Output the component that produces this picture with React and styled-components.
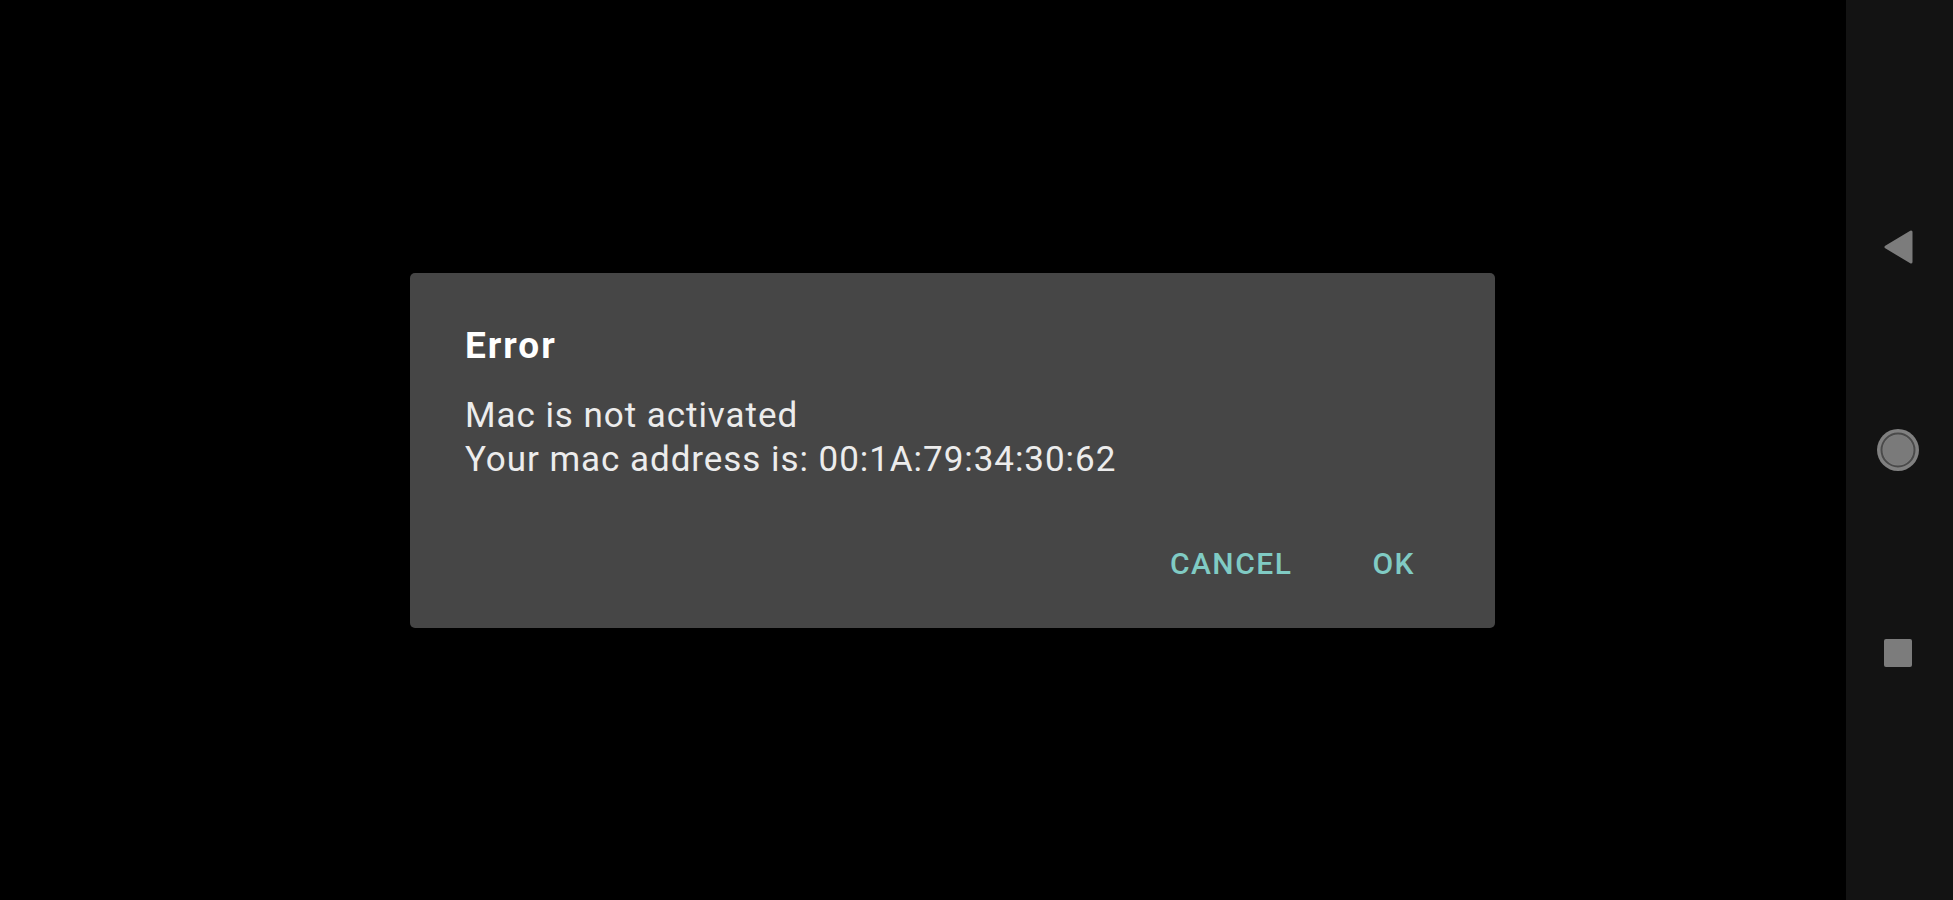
import React from "react";
import styled, { createGlobalStyle } from "styled-components";

const Global = createGlobalStyle`
  html, body { margin: 0; padding: 0; background: #000; }
  body { font-family: Roboto, "Noto Sans", "Liberation Sans", sans-serif; }
  * { box-sizing: border-box; }
`;

const Screen = styled.div`
  display: flex;
  width: 1953px;
  height: 900px;
  background: #000;
  overflow: hidden;
`;

const Stage = styled.main`
  flex: 1;
  display: flex;
  align-items: center;
  padding-left: 410px;
`;

const Dialog = styled.section`
  width: 1085px;
  height: 355px;
  background: #464646;
  border-radius: 5px;
  box-shadow: 0 2px 6px rgba(0, 0, 0, 0.6);
  padding: 51px 62px 46px 55px;
  display: flex;
  flex-direction: column;
`;

const Title = styled.h2`
  margin: 0;
  font-size: 37px;
  line-height: 43px;
  font-weight: 700;
  letter-spacing: 2px;
  color: #ffffff;
`;

const Message = styled.p`
  margin: 27px 0 0;
  font-size: 35px;
  line-height: 44px;
  font-weight: 400;
  letter-spacing: 0.95px;
  color: #ececec;
`;

const Actions = styled.div`
  margin-top: auto;
  display: flex;
  justify-content: flex-end;
  gap: 44px;
`;

const ActionButton = styled.button`
  background: none;
  border: none;
  padding: 0 18px;
  margin: 0;
  font-family: inherit;
  font-size: 30px;
  line-height: 36px;
  font-weight: 500;
  letter-spacing: 0.05em;
  text-transform: uppercase;
  color: #80cbc4;
  cursor: pointer;
`;

const NavBar = styled.nav`
  width: 107px;
  background: #131313;
  display: flex;
  flex-direction: column;
  align-items: center;
  justify-content: center;
  gap: 155px;
  padding-right: 4px;
`;

const NavKey = styled.div`
  width: 48px;
  height: 48px;
  display: flex;
  align-items: center;
  justify-content: center;
`;

const Back = () => (
  <svg width="34" height="36" viewBox="0 0 34 36">
    <path
      d="M30 3 L30 33 L5 18 Z"
      fill="#7c7c7c"
      stroke="#7c7c7c"
      strokeWidth="3"
      strokeLinejoin="round"
    />
  </svg>
);

const Home = () => (
  <svg width="46" height="46" viewBox="0 0 46 46">
    <circle cx="23" cy="23" r="21" fill="#808080" />
    <circle cx="23" cy="23" r="16.5" fill="none" stroke="#4a4a4a" strokeWidth="2" />
    <circle cx="23" cy="23" r="15" fill="#7a7a7a" />
  </svg>
);

const Recents = () => (
  <svg width="30" height="30" viewBox="0 0 30 30">
    <rect x="1" y="1" width="28" height="28" rx="2" fill="#7c7c7c" />
  </svg>
);

export default function App() {
  return (
    <>
      <Global />
      <Screen>
        <Stage>
          <Dialog role="dialog">
            <Title>Error</Title>
            <Message>
              Mac is not activated
              <br />
              Your mac address is: 00:1A:79:34:30:62
            </Message>
            <Actions>
              <ActionButton>Cancel</ActionButton>
              <ActionButton>OK</ActionButton>
            </Actions>
          </Dialog>
        </Stage>
        <NavBar>
          <NavKey><Back /></NavKey>
          <NavKey><Home /></NavKey>
          <NavKey><Recents /></NavKey>
        </NavBar>
      </Screen>
    </>
  );
}
